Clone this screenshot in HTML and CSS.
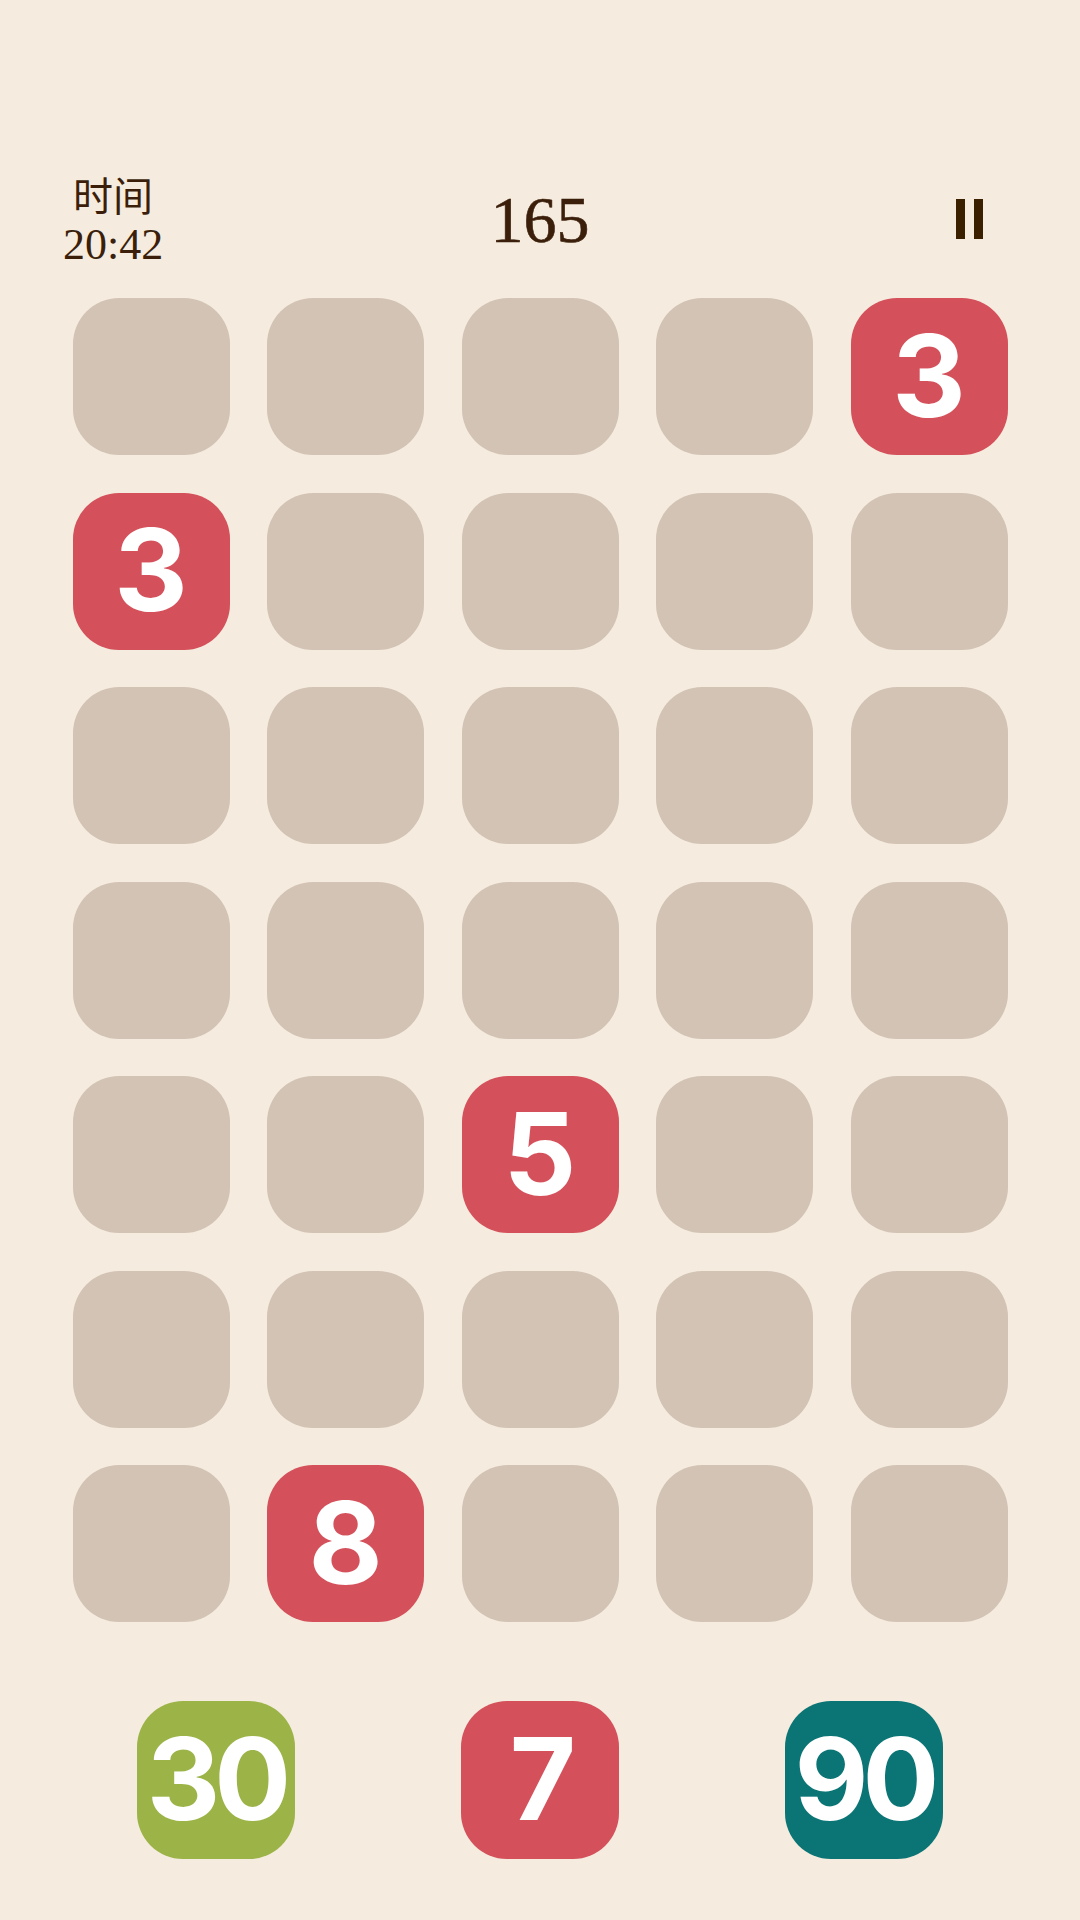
FILE: index.html
```html
<!DOCTYPE html>
<html lang="zh">
<head>
    <meta charset="UTF-8">
    <meta name="viewport" content="width=device-width, initial-scale=1.0">
    <title>合成</title>
    <link rel="stylesheet" href="styles.css">
</head>
<body>
<div class="game">
    <div class="top-bar">
        <div class="timer">
            <div class="timer-label">时间</div>
            <div class="timer-value">20:42</div>
        </div>
        <div class="score">165</div>
        <button class="pause-btn" aria-label="暂停">
            <span></span>
            <span></span>
        </button>
    </div>

    <div class="board">
        <div class="cell"></div>
        <div class="cell"></div>
        <div class="cell"></div>
        <div class="cell"></div>
        <div class="cell tile-red">3</div>

        <div class="cell tile-red">3</div>
        <div class="cell"></div>
        <div class="cell"></div>
        <div class="cell"></div>
        <div class="cell"></div>

        <div class="cell"></div>
        <div class="cell"></div>
        <div class="cell"></div>
        <div class="cell"></div>
        <div class="cell"></div>

        <div class="cell"></div>
        <div class="cell"></div>
        <div class="cell"></div>
        <div class="cell"></div>
        <div class="cell"></div>

        <div class="cell"></div>
        <div class="cell"></div>
        <div class="cell tile-red">5</div>
        <div class="cell"></div>
        <div class="cell"></div>

        <div class="cell"></div>
        <div class="cell"></div>
        <div class="cell"></div>
        <div class="cell"></div>
        <div class="cell"></div>

        <div class="cell"></div>
        <div class="cell tile-red">8</div>
        <div class="cell"></div>
        <div class="cell"></div>
        <div class="cell"></div>
    </div>

    <div class="next-tiles">
        <div class="cell tile-green">30</div>
        <div class="cell tile-red">7</div>
        <div class="cell tile-teal">90</div>
    </div>
</div>
</body>
</html>
```

FILE: styles.css
```css
body {
    margin: 0;
    padding: 0;
    background-color: #f5ecdf;
    color: #3b1f0b;
    font-family: 'Liberation Serif', 'Noto Sans CJK SC', serif;
    height: 1920px;
    overflow: hidden;
}

.game {
    width: 1080px;
}

.top-bar {
    display: grid;
    grid-template-columns: 1fr auto 1fr;
    align-items: center;
    padding: 175px 63px 0 63px;
}

.timer {
    justify-self: start;
    display: flex;
    flex-direction: column;
    align-items: center;
}

.timer-label {
    padding-top: 1px;
    font-size: 40px;
    line-height: 44px;
}

.timer-value {
    font-size: 44px;
    line-height: 49px;
}

.score {
    margin-top: -4px;
    font-size: 66px;
    line-height: 66px;
    -webkit-text-stroke: 0.6px #3b1f0b;
}

.pause-btn {
    justify-self: end;
    display: flex;
    gap: 9px;
    padding: 0;
    margin: -7px 34px 0 0;
    border: none;
    background: transparent;
    cursor: pointer;
}

.pause-btn span {
    display: block;
    width: 9px;
    height: 40px;
    background-color: #3b2000;
}

.board {
    display: grid;
    grid-template-columns: repeat(5, 157px);
    grid-auto-rows: 157px;
    gap: 37.5px;
    justify-content: center;
    margin-top: 29px;
}

.cell {
    display: flex;
    justify-content: center;
    align-items: center;
    box-sizing: border-box;
    padding-bottom: 2px;
    border-radius: 46px;
    background-color: #d2c3b5;
    color: #fff;
    font-family: 'Inter', 'Noto Sans', sans-serif;
    font-weight: 700;
    font-size: 114px;
    line-height: 1;
}

.tile-red {
    background-color: #d4505a;
}

.tile-green {
    background-color: #9bb347;
}

.tile-teal {
    background-color: #0b7475;
}

.next-tiles {
    display: grid;
    grid-template-columns: repeat(3, 158px);
    grid-auto-rows: 158px;
    gap: 166px;
    justify-content: center;
    margin-top: 79px;
}

.next-tiles .cell {
    letter-spacing: -6px;
}
```
